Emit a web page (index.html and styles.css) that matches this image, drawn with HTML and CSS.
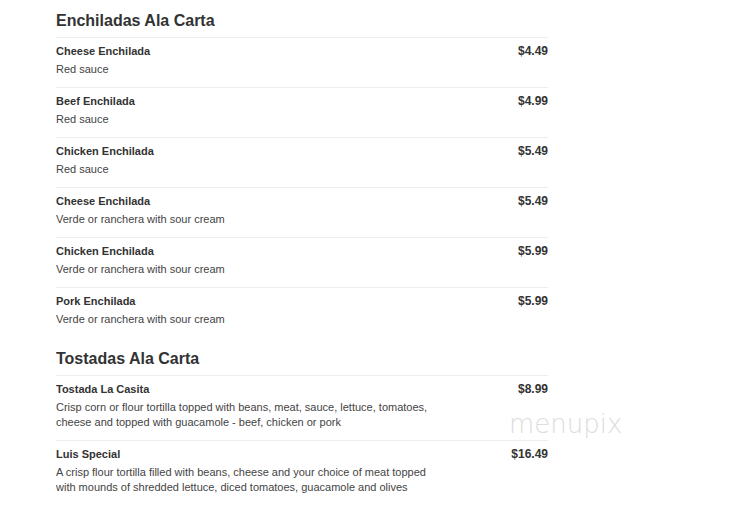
FILE: index.html
```html
<!DOCTYPE html>
<html>
<head>
<meta charset="utf-8">
<link rel="stylesheet" href="styles.css">
</head>
<body>
<div class="menu">
  <section class="section">
    <h2 class="heading">Enchiladas Ala Carta</h2>
    <div class="item"><div class="row"><span class="name">Cheese Enchilada</span><span class="price">$4.49</span></div><div class="desc">Red sauce</div></div>
    <div class="item"><div class="row"><span class="name">Beef Enchilada</span><span class="price">$4.99</span></div><div class="desc">Red sauce</div></div>
    <div class="item"><div class="row"><span class="name">Chicken Enchilada</span><span class="price">$5.49</span></div><div class="desc">Red sauce</div></div>
    <div class="item"><div class="row"><span class="name">Cheese Enchilada</span><span class="price">$5.49</span></div><div class="desc">Verde or ranchera with sour cream</div></div>
    <div class="item"><div class="row"><span class="name">Chicken Enchilada</span><span class="price">$5.99</span></div><div class="desc">Verde or ranchera with sour cream</div></div>
    <div class="item"><div class="row"><span class="name">Pork Enchilada</span><span class="price">$5.99</span></div><div class="desc">Verde or ranchera with sour cream</div></div>
  </section>
  <section class="section">
    <h2 class="heading">Tostadas Ala Carta</h2>
    <div class="item"><div class="row"><span class="name">Tostada La Casita</span><span class="price">$8.99</span></div><div class="desc">Crisp corn or flour tortilla topped with beans, meat, sauce, lettuce, tomatoes,<br>cheese and topped with guacamole - beef, chicken or pork</div></div>
    <div class="item"><div class="row"><span class="name">Luis Special</span><span class="price">$16.49</span></div><div class="desc">A crisp flour tortilla filled with beans, cheese and your choice of meat topped<br>with mounds of shredded lettuce, diced tomatoes, guacamole and olives</div></div>
  </section>
</div>
<div class="watermark">menupix</div>
</body>
</html>
```
FILE: styles.css
```css
body {
  margin: 10px 0 0 56px;
  font-family: "Liberation Sans", Arial, sans-serif;
  background: #fff;
  color: #333;
}
.menu {
  width: 492px;
}
.section + .section {
  margin-top: 11px;
}
.heading {
  margin: 0;
  font-size: 16px;
  line-height: 22px;
  font-weight: bold;
  color: #333;
  padding-bottom: 5px;
}
.item {
  border-top: 1px solid #eeeeee;
  padding: 6px 0 10px;
}
.row {
  display: flex;
  justify-content: space-between;
  align-items: center;
}
.name, .price {
  font-size: 11px;
  line-height: 14px;
  font-weight: bold;
  color: #333;
}
.price {
  font-size: 12px;
}
.desc {
  margin-top: 4px;
  font-size: 11px;
  line-height: 15px;
  color: #444;
}
.watermark {
  position: absolute;
  left: 509px;
  top: 409px;
  font-family: "DejaVu Sans", sans-serif;
  font-weight: 200;
  font-size: 26px;
  color: #dddddd;
}
```
